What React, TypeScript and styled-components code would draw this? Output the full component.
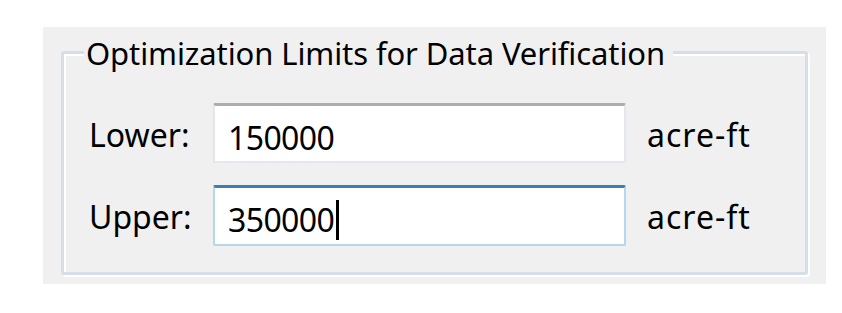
import React from "react";
import styled, { createGlobalStyle } from "styled-components";

const Global = createGlobalStyle`
  html, body { margin: 0; padding: 0; background: #ffffff; }
  body { font-family: "Noto Sans", "Open Sans", sans-serif; }
`;

const Canvas = styled.div`
  padding: 27px 0 0 43px;
`;

const Panel = styled.div`
  width: 783px;
  height: 257px;
  box-sizing: border-box;
  background: #f0f0f0;
  padding: 24px 0 0 18px;
`;

const GroupBox = styled.div`
  position: relative;
  width: 747px;
  height: 224px;
  box-sizing: border-box;
  border: 3px solid #d6dfe6;
  border-radius: 3px;
  box-shadow: inset 2px 2px 0 #ffffff, 2px 2px 0 #ffffff;
  padding: 49px 0 0 25px;
  display: flex;
  flex-direction: column;
  gap: 22px;
`;

const Legend = styled.div`
  position: absolute;
  top: -19px;
  left: 20px;
  padding: 0 8px 0 2px;
  background: #f0f0f0;
  font-size: 31px;
  line-height: 36px;
  letter-spacing: -0.1px;
  color: #000;
  white-space: nowrap;
`;

const Row = styled.div`
  display: flex;
  align-items: center;
  height: 60px;
`;

const Label = styled.div`
  width: 124px;
  font-size: 32px;
  color: #000;
  margin-top: 2px;
`;

const TextBox = styled.div<{ $focused?: boolean }>`
  box-sizing: border-box;
  width: 413px;
  height: ${(p) => (p.$focused ? 61 : 60)}px;
  background: #ffffff;
  border: 2px solid ${(p) => (p.$focused ? "#b5d6ec" : "#e2e8ee")};
  border-top: 3px solid ${(p) => (p.$focused ? "#3d7fb1" : "#acadb1")};
  border-radius: 2px;
  padding: 8px 0 0 13px;
  font-size: 32px;
  line-height: 44px;
  letter-spacing: -0.6px;
  color: #000;
  display: flex;
  align-items: center;
`;

const Caret = styled.span`
  display: inline-block;
  width: 3px;
  height: 40px;
  background: #000;
  margin-left: 2px;
`;

const Unit = styled.div`
  margin-left: 21px;
  font-size: 32px;
  letter-spacing: 1px;
  color: #000;
  margin-top: 2px;
`;

export default function App() {
  return (
    <>
      <Global />
      <Canvas>
        <Panel>
          <GroupBox>
            <Legend>Optimization Limits for Data Verification</Legend>
            <Row>
              <Label>Lower:</Label>
              <TextBox>150000</TextBox>
              <Unit>acre-ft</Unit>
            </Row>
            <Row>
              <Label>Upper:</Label>
              <TextBox $focused>
                350000
                <Caret />
              </TextBox>
              <Unit>acre-ft</Unit>
            </Row>
          </GroupBox>
        </Panel>
      </Canvas>
    </>
  );
}
